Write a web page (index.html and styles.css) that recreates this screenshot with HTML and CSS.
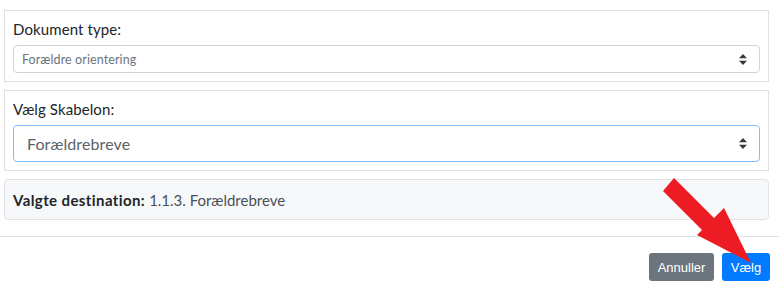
FILE: index.html
```html
<!DOCTYPE html>
<html lang="da">
<head>
<meta charset="utf-8">
<title>Vælg skabelon</title>
<link rel="stylesheet" href="styles.css">
</head>
<body>
<div class="page">
  <div class="content">
    <div class="card">
      <div class="label">Dokument type:</div>
      <div class="select select-sm">
        <span>Forældre orientering</span>
        <svg class="caret" width="8" height="11" viewBox="0 0 8 11"><path d="M4 0 L8 4.3 H0 Z M0 6.7 H8 L4 11 Z" fill="#343a40"/></svg>
      </div>
    </div>
    <div class="card">
      <div class="label">Vælg Skabelon:</div>
      <div class="select select-lg">
        <span>Forældrebreve</span>
        <svg class="caret" width="8" height="11" viewBox="0 0 8 11"><path d="M4 0 L8 4.3 H0 Z M0 6.7 H8 L4 11 Z" fill="#343a40"/></svg>
      </div>
    </div>
    <div class="destination"><strong>Valgte destination:</strong> 1.1.3. Forældrebreve</div>
  </div>
  <div class="footer">
    <button class="btn btn-secondary">Annuller</button>
    <button class="btn btn-primary">Vælg</button>
  </div>
  <svg class="arrow" width="779" height="295" viewBox="0 0 779 295">
    <polygon points="674,178 714,218 724,208 751,263 697,235 702,230 663,191" fill="#ed1c24"/>
  </svg>
</div>
</body>
</html>
```

FILE: styles.css
```css
html, body {
  margin: 0;
  padding: 0;
  background: #fff;
}
body {
  font-family: Lato, "Open Sans", sans-serif;
  color: #212529;
}
.page {
  position: relative;
  width: 779px;
  height: 295px;
  overflow: hidden;
}
.content {
  padding: 10px 10px 0 4px;
  display: flex;
  flex-direction: column;
  gap: 8px;
}
.card {
  border: 1px solid #e0e0e0;
  padding: 8px;
}
.label {
  font-size: 15px;
  line-height: 21px;
  margin-bottom: 5px;
  color: #212529;
  letter-spacing: 0.1px;
}
.select {
  display: flex;
  align-items: center;
  justify-content: space-between;
  border: 1px solid #ced4da;
  border-radius: 4px;
  box-sizing: border-box;
}
.select-sm {
  height: 28px;
  padding: 0 12px 0 8px;
  font-size: 12.5px;
  color: #6c757d;
  letter-spacing: 0.1px;
}
.select-lg {
  height: 37px;
  padding: 0 12px 0 13px;
  font-size: 16px;
  color: #5a6168;
  border-color: #80bdff;
  letter-spacing: 0.1px;
}
.caret {
  display: block;
}
.destination {
  background: #f7f8fa;
  border: 1px solid #e0e3e8;
  border-radius: 4px;
  height: 41px;
  box-sizing: border-box;
  padding: 0 8px;
  display: flex;
  align-items: center;
  font-size: 15px;
  color: #495057;
}
.destination strong {
  font-weight: 700;
  margin-right: 4px;
  color: #212529;
  letter-spacing: 0.4px;
}
.footer {
  margin-top: 16px;
  border-top: 1px solid #dee2e6;
  padding: 16px 9px 0 0;
  display: flex;
  justify-content: flex-end;
  gap: 8px;
}
.btn {
  font-family: "Liberation Sans", Arial, sans-serif;
  font-size: 13px;
  height: 28px;
  border: none;
  border-radius: 3px;
  color: #fff;
  padding: 0 8px;
  margin: 0;
}
.btn-secondary {
  background: #6c757d;
  width: 65px;
}
.btn-primary {
  background: #007bff;
  width: 48px;
}
.arrow {
  position: absolute;
  top: 0;
  left: 0;
  pointer-events: none;
}
```
